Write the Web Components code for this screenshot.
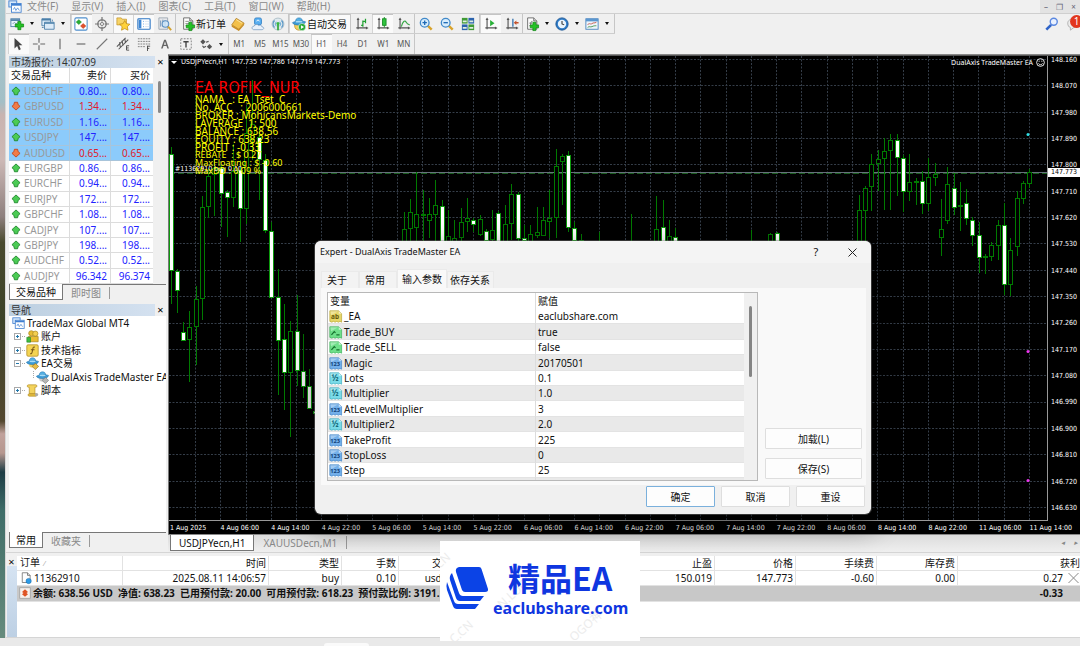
<!DOCTYPE html>
<html lang="zh-CN">
<head>
<meta charset="utf-8">
<meta name="viewport" content="width=device-width, initial-scale=1">
<title>TradeMax Global MT4</title>
<style>
html, body { height: 100%; margin: 0; }
body { font: 10px/14px "Noto Sans", "Noto Sans CJK SC", sans-serif; color: #111; overflow: hidden; background: #f0f0f0; }
</style>
</head>
<body>
<trade-desktop></trade-desktop>
<script>
const define = (name, html, setup) => {
  const tpl = document.createElement('template');
  tpl.innerHTML = '<style>*{box-sizing:border-box}button,a{font:inherit;color:inherit;text-decoration:none}button{border:0;margin:0;padding:0;background:none}:host([hidden]){display:none}</style>' + html;
  customElements.define(name, class extends HTMLElement {
    connectedCallback() {
      if (this.shadowRoot) return;
      const root = this.attachShadow({ mode: 'open' });
      root.append(tpl.content.cloneNode(true));
      if (setup) setup(this, root);
    }
  });
};

/* ---------- icons, all on a 16 x 16 grid ---------- */
const plus = (x, y) => `<path transform="translate(${x} ${y})" d="M3 0h3.4v3H9.500v3.400H6.400v3.100H3V6.400H0V3h3z" fill="#25c225" stroke="#0b8410" stroke-width=".8"/>`;
const axes = '<path d="M3.500 2v12M1.500 12.500h12" stroke="#555" stroke-width="1.300" fill="none"/><path d="M3.500.5 1.800 3.500h3.400zM15.500 12.500l-3-1.700v3.400z" fill="#555"/>';
const sheet = '<path d="M3 1h7l3.500 3.500V14H3z" fill="#fdfdfd" stroke="#666"/><path d="M10 1v3.500h3.500" fill="#ddd" stroke="#666"/>';
const hat = '<path d="M4 5.500C4 2 6 1 8 1s4 1 4 4.500z" fill="#54b0e4" stroke="#2579b5" stroke-width=".7"/><path d="M.5 6.500C3 4.500 13 4 15.500 5.500 14.500 9 10 9.500 7 9.200 4 9 1.500 8.500.5 6.500z" fill="#3d9bd6" stroke="#2272ab" stroke-width=".7"/><ellipse cx="8" cy="5.400" rx="4" ry="1" fill="#a5dcf7"/>';
const param = (a, b, inner) => `<path d="M1 1h11l3.500 3.500V15l-2-1-2 1-2-1-2 1-2-1-2 1L1 14z" fill="${a}" stroke="${b}" stroke-width=".8"/><path d="M12 1v3.500h3.500z" fill="#fff" opacity=".6"/><path d="M1.500 1.500h10l-9 5z" fill="#fff" opacity=".35"/>${inner}`;
const label = (t, c, s) => `<text x="7.500" y="11" font-family="Noto Sans" font-weight="700" font-size="${s}" text-anchor="middle" fill="${c}">${t}</text>`;
const ICONS = {
  logo: '<rect x="1" y="1" width="9" height="7" fill="#d7e8fa" stroke="#3f7fd0"/><rect x="4" y="4" width="11" height="10" fill="#fff" stroke="#3f7fd0"/><path d="M4 5.500h11" stroke="#3f7fd0" stroke-width="2"/><path d="M6 11l1.500-2.500L9 12l2-3 2 3" fill="none" stroke="#5e93d8"/>',
  newchart: '<rect x="1" y="2" width="10" height="9" fill="#e8f2fc" stroke="#4d7ea8"/><path d="M1 3.500h10" stroke="#4d7ea8" stroke-width="2"/><path d="M3 8l2-2 2 2 2-2" stroke="#79a" fill="none"/>' + plus(6, 5),
  profiles: '<path d="M1 2h10v8H1z" fill="#dcebf8" stroke="#4a7fa9"/><path d="M1 3h10" stroke="#4a7fa9" stroke-width="2"/><path d="M4 6h11v8H4z" fill="#dcebf8" stroke="#4a7fa9"/><path d="M4 7h11" stroke="#4a7fa9" stroke-width="1.500"/><path d="M1 12h2M13 3v2" stroke="#4a7fa9"/>',
  market: '<rect x="1" y="1" width="14" height="14" rx="1.500" fill="#fff" stroke="#4f8fcd" stroke-width="1.200"/><path d="M5.500 3l3 2.800-3 2.800-3-2.800z" fill="#27ae32" stroke="#178322" stroke-width=".6"/><path d="M10.500 7.500l3 2.800-3 2.800-3-2.800z" fill="#e4502c" stroke="#b03214" stroke-width=".6"/>',
  data: '<circle cx="8" cy="8" r="4.800" fill="none" stroke="#777" stroke-width="1.500"/><circle cx="8" cy="8" r="1.800" fill="none" stroke="#777"/><path d="M8 0v5M8 11v5M0 8h5M11 8h5" stroke="#777" stroke-width="1.400"/>',
  navigator: '<path d="M1 3V1h5l1 1.500h5V9H1z" fill="#f7d468" stroke="#c29023" stroke-width=".8"/><path d="M10 4l1.900 3.600 4 .6-2.900 2.900.7 4L10 13.200l-3.700 1.900.7-4-2.900-2.900 4-.6z" fill="#ffd23b" stroke="#b98613" stroke-width=".8"/>',
  terminal: '<rect x="1" y="2" width="14" height="12" rx="1" fill="#fff" stroke="#2f77c4" stroke-width="1.300"/><path d="M2 3h3v10H2z" fill="#3d86d4"/><path d="M7 5h1M7 8h1M7 11h1" stroke="#5a9be0"/><path d="M9 5h5M9 8h5M9 11h5" stroke="#d5e2f0"/>',
  tester: '<path d="M1 1h10v13H1z" fill="#e7e9ec" stroke="#9aa5b0"/><path d="M3 4v7M5.500 3v7M8 4v7" stroke="#6c8fb4"/><circle cx="8.500" cy="8" r="3.800" fill="#cfe7fb" fill-opacity=".8" stroke="#5a8fc2" stroke-width="1.200"/><path d="M11.500 11l3.500 4" stroke="#d3a12e" stroke-width="2.200"/>',
  order: sheet + '<path d="M5 5h4M5 7.500h5M5 10h3" stroke="#888"/>' + plus(6, 6),
  editor: '<path d="M6 1.500l9 5.500-6 7L.8 9z" fill="#f3c04a" stroke="#a8741a" stroke-width=".8"/><path d="M.8 9L9 14l6-7v2.200L9 16 .8 11z" fill="#c98d22"/><path d="M6 3l6.500 4" stroke="#fde9a8"/>',
  community: '<rect x="4" y="1" width="8" height="8" rx="2" fill="#58aef0" stroke="#2374bb" stroke-width=".8"/><path d="M6.500 5c0-2 3-2 3 0" stroke="#fff" fill="none"/><path d="M3 14.500c-2.500-.5-2.500-4 .5-4C4 8 8 8 8.800 9.800c2-1.300 4 0 3.700 1.500 3 .2 2.500 3 0 3.200z" fill="#e9f1fa" stroke="#6d93bb" stroke-width=".8"/>',
  signals: '<circle cx="8" cy="8" r="6.800" fill="#dfe9ee" stroke="#a9bcc6"/><path d="M4 12a6 6 0 0 1 0-8M12 4a6 6 0 0 1 0 8" stroke="#4d90c4" fill="none" stroke-width="1.300"/><path d="M6 10.500a3.500 3.500 0 0 1 0-5M10 5.500a3.500 3.500 0 0 1 0 5" stroke="#5aa0cf" fill="none"/><path d="M8 7v8" stroke="#35a83c" stroke-width="2"/><circle cx="8" cy="7.500" r="1.800" fill="#3ab644"/>',
  auto: '<path d="M3 7h10v3c0 3-2 5-5 5s-5-2-5-5z" fill="#f4d05e" stroke="#b38a21" stroke-width=".8"/>' + hat + '<circle cx="11.500" cy="11.500" r="4.200" fill="#27a936" stroke="#fff" stroke-width=".6"/><path d="M10.200 9.300v4.400l3.600-2.200z" fill="#fff"/>',
  bars: axes + '<path d="M9 4v7M9 5h3M7 9.500h2M12 2v5" stroke="#21a031" stroke-width="1.400" fill="none"/>',
  candles: axes + '<path d="M9.500 0v12" stroke="#178a24"/><rect x="7.500" y="2" width="4" height="7.500" fill="#2fc43e" stroke="#178a24"/>',
  line: axes + '<path d="M5 11C6.500 5 9 3 10.500 6c1 2 2 2.500 4 3" stroke="#36a645" stroke-width="1.300" fill="none"/>',
  zoomin: '<path d="M10 10l4.500 4.500" stroke="#d8a32c" stroke-width="2.800"/><circle cx="6.500" cy="6.500" r="5" fill="#d8edfc" stroke="#4189c9" stroke-width="1.500"/><path d="M4 6.500h5M6.500 4v5" stroke="#1d69b5" stroke-width="1.500"/>',
  zoomout: '<path d="M10 10l4.500 4.500" stroke="#d8a32c" stroke-width="2.800"/><circle cx="6.500" cy="6.500" r="5" fill="#d8edfc" stroke="#4189c9" stroke-width="1.500"/><path d="M4 6.500h5" stroke="#1d69b5" stroke-width="1.500"/>',
  tile: '<rect x="1" y="1" width="6.500" height="6.500" fill="#3f9a35"/><rect x="8.500" y="1" width="6.500" height="6.500" fill="#2b63ad"/><rect x="1" y="8.500" width="6.500" height="6.500" fill="#2b63ad"/><rect x="8.500" y="8.500" width="6.500" height="6.500" fill="#3f9a35"/><path d="M2 4h4.500v2H2zM9.500 4H14v2H9.500zM2 11.500h4.500v2H2zM9.500 11.500H14v2H9.500z" fill="#dfeee0"/>',
  scroll: axes + '<path d="M7 3.500v7l5-3.500z" fill="#29b038"/>',
  shift: axes + '<path d="M9 2v9" stroke="#3572ae" stroke-width="1.500"/><path d="M10 6.500l3-2.500v1.700h2.500v1.600H13V9z" fill="#c4512b"/>',
  indicator: sheet + '<path d="M5 10c2 1 1-6 3.500-5M5 7h3" stroke="#666" fill="none"/>' + plus(6, 6),
  clock: '<circle cx="8" cy="8" r="7" fill="#2c7ac8" stroke="#16508e"/><circle cx="8" cy="8" r="4.800" fill="#e9f4fd"/><path d="M8 4.500V8l2.500 1" stroke="#333" fill="none" stroke-width="1.200"/>',
  template: '<rect x="1" y="2" width="14" height="12" fill="#eef5fb" stroke="#4682bd"/><path d="M1 3.500h14" stroke="#5b97d0" stroke-width="3"/><path d="M3 9c2-3 3 0 5-1.500s2.500 0 5-1.500" stroke="#c35546" fill="none"/><path d="M3 12c2-2 3 0 5-1s3-1 5-1" stroke="#40924c" fill="none"/>',
  cursor: '<path d="M4 1v12l3-2.800 2 4.800 2.200-1-2-4.500H13z" fill="#444"/>',
  cross: '<path d="M8 1v5.500M8 9.500V15M1 8h5.500M9.500 8H15" stroke="#666" stroke-width="1.300"/>',
  vline: '<path d="M8 2v12" stroke="#666" stroke-width="1.300"/>',
  hline: '<path d="M3 8h10" stroke="#666" stroke-width="1.300"/>',
  trend: '<path d="M2 14L14 2" stroke="#777" stroke-width="1.300"/>',
  channel: '<path d="M1 11L11 1M3 14L14 3M4 6l1 6M7 4l1 6M10 2l1 5" stroke="#555" stroke-width="1.200"/><path d="M12 10h3M12 12.500h2.500M12 15h3M12 10v5" stroke="#444" fill="none"/>',
  fibo: '<path d="M1 2h14M1 5h14M1 8h14M1 11h9" stroke="#777" stroke-dasharray="2 1"/><path d="M12 10v6M12 10.500h3M12 13h2" stroke="#444" fill="none"/>',
  text: '<path d="M3.500 13L7 3h2l3.500 10h-1.800l-1-2.800H6.300l-1 2.800z" fill="#666"/><path d="M6.700 8.800h2.600L8 5z" fill="#f0f0f0"/>',
  textbox: '<rect x="2" y="2" width="12" height="12" fill="none" stroke="#777" stroke-dasharray="2 1.500"/><path d="M5 5.500h6M8 5.500V12" stroke="#444" stroke-width="1.600"/>',
  arrows: '<path d="M4.500 2.500l3 3-3 3-3-3z" fill="#555"/><path d="M12 8l3 3-3 3-3-3z" fill="#555"/><path d="M8 6l3-1M4 10l1.500 2L8 10.500" fill="none" stroke="#555" stroke-width="1.400"/>',
  search: '<path d="M7 9l-5.500 5.500" stroke="#2f64c9" stroke-width="3"/><circle cx="10" cy="5.500" r="4" fill="#e9f1ff" stroke="#5b88e0" stroke-width="1.600"/>',
  chat: '<path d="M2 7c0-3 3-5 7-5s6 2 6 5-3 5-6 5l-4 3v-3C3 11.500 2 9.500 2 7z" fill="#ececec" stroke="#aaa"/>',
  up: '<path d="M8 1.500l6.500 6-3 2.500-1 4h-5l-1-4-3-2.500z" fill="#4bcb54" stroke="#1d8529" stroke-width="1.400"/>',
  down: '<path d="M8 14.500l6.500-6-3-2.500-1-4h-5l-1 4-3 2.500z" fill="#f07c48" stroke="#c24217" stroke-width="1.400"/>',
  accounts: '<circle cx="6.500" cy="4" r="3.200" fill="#e8bd34" stroke="#98750e" stroke-width=".7"/><circle cx="11.500" cy="4.500" r="3.200" fill="#f3cf52" stroke="#98750e" stroke-width=".7"/><path d="M3 8h12v6.500H3z" fill="#e9bd31" stroke="#98750e" stroke-width=".7"/><path d="M1 9h4.500v6H1z" fill="#3dbb40" stroke="#1c7f22" stroke-width=".7"/>',
  func: '<rect x="1" y="1" width="14" height="14" rx="1.500" fill="#f4d452" stroke="#b6912a"/><path d="M11 4C8.500 3 8.500 5 8 8s-1 4.500-3 4M6 7h4.500" stroke="#77551a" fill="none" stroke-width="1.300"/>',
  expert: '<path d="M4 8h7v2c0 2-1.500 3-3.500 3S4 12 4 10z" fill="#f4d05e"/>' + hat + '<path d="M11.500 8l4 3.500-4 4-4-4z" fill="#e9bd45" stroke="#94701c" stroke-width=".8"/>',
  expertgray: '<path d="M4 8h7v2c0 2-1.500 3-3.500 3S4 12 4 10z" fill="#ccc"/>' + hat + '<path d="M11.500 8l4 3.500-4 4-4-4z" fill="#b5b5b5" stroke="#777" stroke-width=".8"/>',
  script: '<path d="M3 1h9c2 0 2 3 0 3h-1v8H4V4H3C1 4 1 1 3 1z" fill="#f3d35d" stroke="#b08a20" stroke-width=".8"/><path d="M4 12h8c2 0 2 3 0 3H4c-2 0-2-3 0-3z" fill="#e4bd3f" stroke="#b08a20" stroke-width=".8"/><circle cx="13" cy="13" r="2" fill="#aaa"/>',
  ab: param('#e6d668', '#b3a02e', label('ab', '#675a0c', 8)),
  bool: param('#6fe08a', '#35ab52', '<path d="M3 11l3.500-4 1.500 1.500M9 11h4" stroke="#15712e" fill="none" stroke-width="1.500"/>'),
  int: param('#74b0ea', '#3d7fc2', label('123', '#123f77', 7)),
  dbl: param('#7adbe8', '#35a9bb', label('½', '#176a7a', 10)),
  position: sheet + '<circle cx="11.500" cy="12" r="3.500" fill="#2d9be6" stroke="#1769a8" stroke-width=".7"/>',
  balance: '<rect x="1" y="1" width="14" height="14" fill="#f7f2ee" stroke="#9b9b9b"/><path d="M8 3l4 3.500L10 8l2 1.500L8 13 4 9.500 6 8 4 6.500z" fill="#df5425"/>'
};
define('ui-icon', `<style>:host{display:inline-block;width:14px;height:14px;flex:none}svg{display:block;width:100%;height:100%;overflow:visible}</style><svg viewBox="0 0 16 16" aria-hidden="true"></svg>`,
  (el, r) => { r.querySelector('svg').innerHTML = ICONS[el.getAttribute('name')] || ''; });

define('tool-button', `<style>
:host{display:flex;flex:1;min-width:0}
button{display:flex;flex:1;align-items:center;justify-content:center;gap:1px;white-space:nowrap;color:#111}
:host([active]) button{background:#fafafa;box-shadow:inset 0 1px #c4c4c4,inset 1px 0 #d4d4d4}
:host([period]) button{font-size:8px;color:#555}
.arrow{display:none;border:2px solid transparent;border-top:3px solid #111;border-bottom:0;margin:0 3px 0 5px}
:host([drop]) .arrow{display:block}
:host([tight]) .arrow{margin:0 3px 0 6px}
</style><button type="button"><slot></slot><i class="arrow"></i></button>`,
(el, r) => {
  const n = el.getAttribute('icon');
  if (n) { const i = document.createElement('ui-icon'); i.setAttribute('name', n); r.querySelector('button').prepend(i); r.querySelector('button').setAttribute('aria-label', el.textContent.trim() || n); }
});

define('tool-group', `<style>:host{display:flex;border-right:1px solid #c6c6c6;width:var(--w);flex:none;box-sizing:border-box}</style><slot></slot>`,
  el => el.style.setProperty('--w', el.getAttribute('span') + 'px'));

define('menu-bar', `<style>
:host{display:flex;height:14px;border-bottom:1px solid #cfcfcf;align-items:center;color:#8a8a8a;padding-left:2px;background:#f0f0f0}
nav{display:flex;gap:13px;margin-left:5px;flex:1;line-height:11px}
nav button{line-height:11px;white-space:nowrap}
.win{display:flex;height:13px;background:#e3e3e3;width:40px;justify-content:space-around;align-items:center;font-size:8px;line-height:10px}
.win button{color:#667;line-height:10px}
</style><ui-icon name="logo"></ui-icon><nav></nav><div class="win"><button aria-label="min">–</button><button aria-label="restore">❐</button><button aria-label="close">×</button></div>`,
(el, r) => {
  r.querySelector('nav').innerHTML = ['文件(F)', '显示(V)', '插入(I)', '图表(C)', '工具(T)', '窗口(W)', '帮助(H)'].map(t => `<button type="button">${t}</button>`).join('');
});

const tb = (names, opt = '') => names.split(' ').map(n => {
  const on = n.endsWith('*'), d = n.endsWith('+'), k = n.replace(/[*+]$/, '');
  return `<tool-button icon="${k}" ${on ? 'active' : ''} ${d ? 'drop' : ''} ${opt}></tool-button>`;
}).join('');
define('tool-area', `<style>
:host{display:block;background:#f0f0f0}
.row{display:flex;height:20px;padding-left:2px;align-items:stretch}
.bar{display:flex;border-bottom:1px solid #cdcdcd}
.end{margin-left:auto;display:flex;gap:7px;align-items:center;position:relative}
.end button{display:flex}
.badge{position:absolute;right:-3px;top:1px;width:13px;height:13px;border-radius:7px;background:#e2371f;color:#fff;text-align:center;line-height:13px;font-size:10px}
.word{flex:none;padding:0 2px 0 5px}
</style>
<div class="row"><div class="bar">
<tool-group span="63">${tb('newchart+ profiles+')}</tool-group>
<tool-group span="105">${tb('market* data navigator* terminal* tester')}</tool-group>
<tool-group span="113"><tool-button class="word" icon="order">新订单</tool-button>${tb('editor community signals')}</tool-group>
<tool-group span="62"><tool-button active icon="auto">自动交易</tool-button></tool-group>
<tool-group span="64">${tb('bars candles* line')}</tool-group>
<tool-group span="65">${tb('zoomin zoomout tile')}</tool-group>
<tool-group span="43">${tb('scroll* shift')}</tool-group>
<tool-group span="92">${tb('indicator+ clock+ template+')}</tool-group>
</div><div class="end"><button type="button" aria-label="search"><ui-icon name="search"></ui-icon></button><button type="button" aria-label="chat"><ui-icon name="chat"></ui-icon></button><span class="badge">1</span></div></div>
<div class="row">
<tool-group span="221">${tb('cursor* cross vline hline trend channel fibo text textbox')}<tool-button class="drop" icon="arrows" drop></tool-button></tool-group>
<tool-group span="186">${['M1', 'M5', 'M15', 'M30', 'H1', 'H4', 'D1', 'W1', 'MN'].map(p => `<tool-button period ${p === 'H1' ? 'active' : ''}>${p}</tool-button>`).join('')}</tool-group>
</div><style>.drop{flex:none;width:32px}</style>`);

define('dock-tabs', `<style>
:host{display:flex;height:16px;border-top:1px solid #777}
button{padding:0 8px;line-height:14px;color:#888;white-space:nowrap}
button[aria-selected=true]{background:#fff;color:#111;border:1px solid #777;border-top:0;margin-top:-1px;padding:0 6px}
button:last-child{border-right:1px solid #999;height:12px;margin-top:2px;line-height:11px}
</style>`, (el, r) => el.getAttribute('tabs').split('|').forEach((t, i) => {
  const b = document.createElement('button'); b.type = 'button'; b.role = 'tab'; b.setAttribute('aria-selected', i === 0); b.textContent = t; r.append(b);
}));

define('dock-panel', `<style>
:host{display:flex;flex-direction:column;min-height:0}
header{display:flex;height:12px;line-height:12px;color:#333}
h2{flex:1;margin:0;font:inherit;padding-left:2px;background:linear-gradient(90deg,#bccfe0,#d4e1f0)}
header button{width:11px;line-height:12px;font-size:11px;color:#000}
.body{flex:1;background:#fff;min-height:0;display:flex;overflow:hidden}
</style><header><h2></h2><button type="button" aria-label="close">×</button></header><div class="body"><slot></slot></div><slot name="tabs"></slot>`,
(el, r) => r.querySelector('h2').textContent = el.getAttribute('heading'));

define('market-watch', `<style>
:host{display:flex;flex:1}
table{flex:1;border-collapse:separate;border-spacing:0;table-layout:fixed;width:100%}
th{font-weight:400;height:16px}
td,th{padding:0 3px 0 0;text-align:right;line-height:13px;border-right:1px solid #dcdcdc;border-bottom:1px solid #dcdcdc;color:#22f;overflow:hidden;white-space:nowrap}
th{color:#111;line-height:15px}
td:first-child,th:first-child{text-align:left;padding-left:2px;color:#999}
th:first-child{color:#111}
td:last-child,th:last-child{border-right:0}
tr{height:15px}
td{height:inherit}
tbody tr:nth-child(5n+2),tbody tr:nth-child(5n+4){height:16px}
.hot td{background:#8ccbfb;border-color:#a8c4da}
.dn td{color:#e0202c}
.dn td:first-child{color:#999}
ui-icon{width:10px;height:10px;vertical-align:-1px;margin-right:3px}
.gutter{width:13px;background:#f0f0f0;padding:13px 5px}
.thumb{height:32px;width:3px;border-radius:2px;background:#888}
</style><table><colgroup><col style="width:61px"><col style="width:41px"><col></colgroup><thead><tr><th>交易品种</th><th>卖价</th><th>买价</th></tr></thead><tbody></tbody></table><div class="gutter"><div class="thumb"></div></div>`,
(el, r) => {
  r.querySelector('tbody').innerHTML = [['USDCHF', '0.80...', 'hot'], ['GBPUSD', '1.34...', 'hot dn'], ['EURUSD', '1.16...', 'hot'], ['USDJPY', '147....', 'hot'], ['AUDUSD', '0.65...', 'hot dn'], ['EURGBP', '0.86...'], ['EURCHF', '0.94...'], ['EURJPY', '172....'], ['GBPCHF', '1.08...'], ['CADJPY', '107....'], ['GBPJPY', '198....'], ['AUDCHF', '0.52...'], ['AUDJPY', '96.342', '', '96.374']]
    .map(([s, a, c = '', b = a]) => `<tr class="${c}"><td><ui-icon name="${c.includes('dn') ? 'down' : 'up'}"></ui-icon>${s}</td><td>${a}</td><td>${b}</td></tr>`).join('');
});

define('nav-tree', `<style>
:host{display:block;flex:1;min-width:0}
ul{list-style:none;margin:0;padding:0}
li{display:flex;align-items:center;height:13px;white-space:nowrap;padding-left:3px;gap:2px;line-height:13px}
li:nth-child(odd){height:14px}
li.kid{padding-left:5px}
li.leaf{padding-left:28px}
ui-icon{width:13px;height:13px}
.box{width:7px;height:7px;border:1px solid #aaa;background:linear-gradient(#27a,#27a) center/3px 1px no-repeat}
.box.plus{background:linear-gradient(#27a,#27a) center/3px 1px no-repeat,linear-gradient(#27a,#27a) center/1px 3px no-repeat}
.dots{width:3px;border-top:1px dotted #aaa;margin:0 -1px}
.leaf .dots{width:8px;height:7px;border-left:1px dotted #aaa;border-top:0;border-bottom:1px dotted #aaa;margin:-6px 0 0 -4px}
</style><ul role="tree">
<li role="treeitem"><ui-icon name="logo"></ui-icon>TradeMax Global MT4</li>
<li role="treeitem" class="kid"><i class="box plus"></i><i class="dots"></i><ui-icon name="accounts"></ui-icon>账户</li>
<li role="treeitem" class="kid"><i class="box plus"></i><i class="dots"></i><ui-icon name="func"></ui-icon>技术指标</li>
<li role="treeitem" class="kid"><i class="box"></i><i class="dots"></i><ui-icon name="expert"></ui-icon>EA交易</li>
<li role="treeitem" class="leaf"><i class="dots"></i><ui-icon name="expertgray"></ui-icon>DualAxis TradeMaster EA</li>
<li role="treeitem" class="kid"><i class="box plus"></i><i class="dots"></i><ui-icon name="script"></ui-icon>脚本</li>
</ul>`);

/* Candles: x, high, body top, body bottom, low, 1 when bearish */
const CANDLES = [
[171,147,154,271,304,1],[177,269,271,291,313,1],[183,322,332,341,341,1],[189,311,327,340,382],[196,286,299,327,365],[202,196,207,299,320],[208,168,176,207,218],[214,158,168,175,216],[221,165,168,194,227,1],[227,190,192,198,237,1],[233,144,171,198,207],[240,160,170,209,242,1],[246,106,133,209,224],[252,80,124,140,160],[259,126,137,160,200,1],[265,154,160,231,233,1],[271,222,231,298,298,1],[278,269,297,341,395,1],[284,304,339,373,410,1],[290,321,331,373,437],[297,295,331,371,386,1],[303,334,371,387,398,1],[309,369,386,409,409,1],[315,405,411,414,430,1],
[404,212,229,248,260],[410,199,212,229,250],[416,172,214,228,250],[423,190,214,216,250],[429,198,214,221,238],[435,180,205,215,241],[442,200,206,244,250,1],[448,210,236,250,260],[454,220,238,250,260],[461,208,222,238,250],[467,198,218,222,232],[473,218,220,225,232,1],[480,215,219,235,236],[486,229,231,241,241,1],[492,210,230,240,250],[498,211,213,250,250,1],[505,205,224,250,250],[511,184,194,224,240],[518,192,194,239,250,1],[524,225,238,241,250,1],[530,225,234,250,250],[537,207,232,236,238],[543,207,220,236,236],[549,190,218,222,238],[556,149,166,218,238],[562,154,156,162,205],[568,151,155,228,232,1],[574,222,228,241,250,1],[581,234,240,250,250],[599,232,244,250,250],[631,214,244,250,250],[656,196,229,250,250],[663,200,227,250,250,1],[669,220,236,250,250],[675,228,237,250,250,1],[751,230,248,252,252],[770,233,234,250,250],[777,232,233,250,250,1],
[859,195,210,250,260],[865,186,188,211,245],[871,154,164,187,211],[878,150,159,164,191],[884,138,151,159,210],[890,134,140,151,210],[897,134,140,158,196,1],[903,155,158,192,212,1],[909,154,182,192,201],[916,178,181,183,205],[922,171,181,204,214,1],[928,158,177,204,211],[935,163,174,178,186],[941,199,229,238,256],[947,167,184,221,224],[954,173,188,208,215,1],[960,182,205,207,231],[966,189,203,219,225,1],[972,217,220,236,246,1],[979,222,235,258,273,1],[985,254,256,258,274],[991,242,245,257,261],[998,220,225,246,260],[1004,203,225,285,295,1],[1010,238,250,285,296],[1017,191,198,247,256],[1023,181,183,199,204],[1029,169,172,184,188]];

define('price-chart', `<style>
:host{display:grid;grid-template:minmax(0,1fr) 13px/minmax(0,1fr) 32px;background:#000;color:#fff;border-top:1px solid #555;border-left:1px solid #777;position:relative;font:7px/8px "DejaVu Sans Condensed","Noto Sans",sans-serif;overflow:hidden}
.plot{position:relative;overflow:hidden;border-right:1px solid #999;border-bottom:1px solid #999}
svg{position:absolute;left:0;top:0;width:100%;height:100%}
.prices{display:flex;flex-direction:column;justify-content:space-between;height:456px;padding-left:3px;position:relative}
.now{position:absolute;left:0;right:0;top:112px;background:#fff;color:#000;padding-left:3px;line-height:9px}
.times{grid-column:1/3;display:flex;padding-top:3px;padding-left:1px}
.times span{flex:1;min-width:0;white-space:nowrap}
.head{position:absolute;left:2px;top:2px;white-space:pre;display:flex;gap:4px;align-items:center}
.head,.ea,.info{font-family:"Noto Sans",sans-serif}
.head i{border:3px solid transparent;border-top-color:#fff;border-bottom:0}
.ea{position:absolute;right:2px;top:2px;display:flex;gap:3px;align-items:center}
.ea svg{position:static;width:9px;height:9px}
.order{position:absolute;left:6px;top:109px}
.info{position:absolute;left:26px;top:25px;color:#ff0;font-size:10px;line-height:8px;white-space:pre}
.info strong{display:block;color:#f00;font-family:"DejaVu Sans Condensed",sans-serif;font-size:16px;line-height:14px;font-weight:400}
.info span{display:block}
.info .s{font-size:9px}
</style>
<div class="plot"><svg class="g"></svg>
<div class="order">#11362910 buy 0.10</div>
<div class="info"><strong>EA ROFIK_NUR</strong><span>NAMA   : EA  Tset  C</span><span>No. ACC   : 2006000661</span><span>BROKER : MohicansMarkets-Demo</span><span>LAVERAGE  1: 500</span><span>BALANCE : 638.56</span><span>EQUITY : 638.23</span><span>PROFIT : -0.33</span><span class="s">REBATE  : $ 0.27</span><span class="s">MaxFloating : $ -0.60</span><span class="s">MaxDD : 0.09 %</span></div>
<div class="head"><i></i><span>USDJPYecn,H1  147.735 147.786 147.719 147.773</span></div>
<div class="ea">DualAxis TradeMaster EA <svg viewBox="0 0 10 10" fill="none" stroke="#fff"><circle cx="5" cy="5" r="4.300"/><path d="M2.800 6c1 2 3.400 2 4.400 0M3.500 3v1.200M6.500 3v1.200"/></svg></div>
</div><div class="prices"></div><div class="times"></div>`,
(el, r) => {
  const g = [];
  for (let k = 0; k < 70; k++) { const x = Math.round(195 + 25.27 * k) + .5; g.push(`<path d="M${x} 56V900" stroke="#343d48" stroke-dasharray="2 1.500"/>`); }
  for (let k = 0; k < 30; k++) { const y = Math.round(59 + 26.35 * k) + .5; g.push(`<path d="M169 ${y}H2400" stroke="#343d48" stroke-dasharray="2 1.500"/>`); }
  g.push('<path d="M169 172.500H2400" stroke="#66717c"/><path d="M169 173.500H2400" stroke="#1a5c1f" stroke-dasharray="6 3"/>');
  for (const [x, h, t, b, l, w] of CANDLES) {
    g.push(`<path d="M${x + .5} ${h}V${t}M${x + .5} ${b}V${l}" stroke="#007a00"/>`);
    g.push(`<rect x="${x - 1.5}" y="${t + .5}" width="4" height="${Math.max(1, b - t - 1)}" fill="${w ? '#fff' : '#000'}" stroke="${w ? '#0c9a0c' : '#007a00'}"/>`);
  }
  g.push('<circle cx="1028" cy="134.500" r="1.500" fill="#2fe0e6"/><circle cx="1028" cy="351.500" r="1.500" fill="#f034f0"/><circle cx="1028" cy="480.500" r="1.500" fill="#f034f0"/>');
  r.querySelector('.g').innerHTML = `<g transform="translate(-169 -56)" fill="none">${g.join('')}</g>`;
  const P = [];
  for (let i = 0; i < 18; i++) P.push(`<span>${(148.16 - i * .09).toFixed(3)}</span>`);
  r.querySelector('.prices').innerHTML = P.join('') + '<span class="now">147.773</span>';
  const T = ['1 Aug 2025'];
  for (const d of [4, 5, 6, 7, 8, 11]) for (const h of ['06', '14', '22']) if (d < 11 || h < '22') T.push(`${d} Aug ${h}:00`);
  r.querySelector('.times').innerHTML = T.map(t => `<span>${t}</span>`).join('');
});

define('chart-tabs', `<style>
:host{display:flex;height:18px;background:linear-gradient(#dcdcdc,#efefef);border-top:1px solid #888;padding:0 2px 1px}
button{padding:0 9px;color:#888;line-height:14px;border-right:1px solid #999;height:13px;margin-top:1px}
button.on{background:#fff;color:#111;border:1px solid #777;border-top:0;height:16px;margin-top:0;padding:0 8px}
span{margin-left:auto;color:#888;font-size:7px;display:flex;gap:9px;line-height:16px}
</style><button class="on" type="button">USDJPYecn,H1</button><button type="button">XAUUSDecn,M1</button><span><i>◂</i><i>▸</i></span>`);

const PARAMS = [['ab', '_EA', 'eaclubshare.com'], ['bool', 'Trade_BUY', 'true'], ['bool', 'Trade_SELL', 'false'], ['int', 'Magic', '20170501'], ['dbl', 'Lots', '0.1'], ['dbl', 'Multiplier', '1.0'], ['int', 'AtLevelMultiplier', '3'], ['dbl', 'Multiplier2', '2.0'], ['int', 'TakeProfit', '225'], ['int', 'StopLoss', '0'], ['int', 'Step', '25'], ['int', '', '']];
define('expert-dialog', `<style>
:host{display:flex;flex-direction:column;background:#f0f0f0;border-radius:6px;box-shadow:0 0 0 1px #8886,0 10px 26px 4px #0006;overflow:hidden}
header{display:flex;height:22px;background:#f4f4f4;align-items:center;padding:0 12px 0 5px}
h2{font:inherit;font-size:9px;margin:0;flex:1}
header button{width:14px;margin-left:22px;display:flex;justify-content:center;font-size:11px}
header svg{width:9px;height:9px}
nav{display:flex;align-items:flex-end;padding:6px 0 0 6px;height:25px}
nav button{height:17px;padding:0 9px 0 5px;min-width:38px;background:#f3f3f3;border:1px solid #eaeaea;border-bottom:0;text-align:left;line-height:15px}
nav button.on{height:19px;background:#f9f9f9;padding:0 4px}
nav button.last{padding:0 3px 0 2px}
.page{display:flex;background:#f9f9f9;margin:0 5px 0 6px;padding:4px 4px 4px 6px;gap:7px;height:197px}
.list{flex:1;display:flex;border:1px solid #b8b8b8;height:189px;overflow:hidden;background:#fff}
table{flex:1;border-spacing:0;table-layout:fixed;width:100%;align-self:flex-start}
th{font-weight:400;text-align:left;height:16px;line-height:14px}
td,th{padding:0 2px;white-space:nowrap}
tbody td{line-height:14px;border-bottom:1px solid #e3e3e3}
td:first-child,th:first-child{border-right:1px solid #dcdcdc}
td:first-child{padding-left:1px}
tr{height:15px}
tbody tr:nth-child(5n+2),tbody tr:nth-child(5n+4){height:16px}
tbody tr:nth-child(even) td{background:#e9e9e9}
ui-icon{width:13px;height:13px;vertical-align:-3px;margin-right:2px}
.gutter{width:13px;background:#f0f0f0;padding:13px 5px}
.thumb{width:3px;height:71px;border-radius:2px;background:#858585}
.side{width:97px;display:flex;flex-direction:column;justify-content:flex-end;gap:9px;padding-bottom:2px}
.side button,footer button{background:#fdfdfd;border:1px solid #dedede;border-radius:1px;height:21px}
footer{display:flex;justify-content:flex-end;gap:6px;padding:1px 6px 0 0}
footer button{width:69px}
footer .ok{border-color:#7ab0dc}
</style>
<header><h2>Expert - DualAxis TradeMaster EA</h2><button type="button">?</button><button type="button" aria-label="close"><svg viewBox="0 0 9 9"><path d="M.5.5l8 8M8.500.5l-8 8" stroke="#222"/></svg></button></header>
<nav><button type="button">关于</button><button type="button">常用</button><button class="on" type="button">输入参数</button><button type="button" class="last">依存关系</button></nav>
<div class="page"><div class="list"><table><thead><tr><th>变量</th><th>赋值</th></tr></thead><tbody></tbody></table><div class="gutter"><div class="thumb"></div></div></div>
<div class="side"><button type="button">加载(L)</button><button type="button">保存(S)</button></div></div>
<footer><button class="ok" type="button">确定</button><button type="button">取消</button><button type="button">重设</button></footer>`,
(el, r) => { r.querySelector('tbody').innerHTML = PARAMS.map(([i, k, v]) => `<tr><td><ui-icon name="${i}"></ui-icon>${k}</td><td>${v}</td></tr>`).join(''); });

define('trade-terminal', `<style>
:host{display:flex;background:#f0f0f0;border-top:1px solid #d5d5d5;border-bottom:1px solid #d5d5d5;padding-top:3px}
aside{width:11px;display:flex;flex-direction:column}
aside button{font-size:11px;line-height:9px;height:10px}
aside i{flex:1;background:linear-gradient(#d5e3f2,#bdd0e4);margin-left:1px}
.body{flex:1;min-width:0;background:#fff}
table{width:100%;border-spacing:0;table-layout:fixed}
th,td{font-weight:400;text-align:right;padding:0 2px;height:15px;line-height:13px;white-space:nowrap;border-right:1px solid #e2e2e2;border-bottom:1px solid #e2e2e2;overflow:hidden}
th:first-child,td:first-child{text-align:left;padding-left:3px}
th:last-child,td:last-child{border-right:0}
th:last-child{padding-right:0}
td:last-child{padding-right:17px;position:relative}
td button{position:absolute;right:1px;top:2px;display:flex}
td svg{width:11px;height:10px}
th span{color:#999;margin-left:4px;font-size:7px}
ui-icon{width:12px;height:12px;vertical-align:-2px;margin-right:2px}
.sum td{background:#c8c8c8;font-weight:700;border-right:0;white-space:pre;height:16px;padding-left:2px}
</style><aside><button type="button" aria-label="close">×</button><i></i></aside><div class="body"><table>
<colgroup><col style="width:106px"><col style="width:146px"><col style="width:73px"><col style="width:57px"><col style="width:76px"><col style="width:120px"><col style="width:120px"><col style="width:81px"><col style="width:81px"><col style="width:81px"><col></colgroup>
<thead><tr><th>订单<span>⁄</span></th><th>时间</th><th>类型</th><th>手数</th><th>交易品种</th><th></th><th>止盈</th><th>价格</th><th>手续费</th><th>库存费</th><th>获利</th></tr></thead>
<tbody><tr><td><ui-icon name="position"></ui-icon>11362910</td><td>2025.08.11 14:06:57</td><td>buy</td><td>0.10</td><td>usdjpyecn</td><td></td><td>150.019</td><td>147.773</td><td>-0.60</td><td>0.00</td><td>0.27<button type="button" aria-label="close order"><svg viewBox="0 0 11 10"><path d="M.5 0l10 10M10.500 0l-10 10" stroke="#888"/></svg></button></td></tr>
<tr class="sum"><td colspan="10"><ui-icon name="balance"></ui-icon>余额: 638.56 USD  净值: 638.23  已用预付款: 20.00  可用预付款: 618.23  预付款比例: 3191.15%</td><td>-0.33</td></tr></tbody></table></div>`);

define('brand-card', `<style>:host{display:block;width:200px;height:100px;background:#fff}svg{display:block;font-family:"Noto Sans","Noto Sans CJK SC",sans-serif}</style>
<svg width="200" height="100" viewBox="0 0 200 100"><g fill="#ececec" font-size="12"><text transform="translate(-3 30) rotate(-42)">.CN</text><text transform="translate(14 103) rotate(-42)">C.CN</text><text transform="translate(62 68) rotate(-42)">N.LOGO</text><text transform="translate(134 101) rotate(-42)">OGO神</text></g>
<g fill="#0b43e6"><path d="M19 26h20q2 0 2.500 2l6.500 20q.5 3-3 3H25q-2 0-3-2l-6-18q-1-4 3-5z"/><path d="M12 32l7 20q1 3 4 3h21l-4 5H20q-3 0-4-3L10 39q-1-4 2-7z"/><path d="M7 41l7 19q1 3 4 3h21l-4 5H17q-3 0-4-3L7 49q-1-5 0-8z"/></g>
<g fill="#0f36e0" font-weight="700"><text x="68" y="50" font-size="32" style="font-family:'Noto Sans CJK SC',sans-serif">精品EA</text><text x="53" y="73" font-size="16">eaclubshare.com</text></g></svg>`);

define('trade-desktop', `<style>
:host{display:grid;height:100vh;grid-template:minmax(0,1fr) 8px/5px minmax(0,1fr);position:relative;overflow:hidden}
.wall{background:linear-gradient(#a9c7cf 0,#a3bfc6 16%,#c9b4b0 18%,#cdb9b6 25%,#8d7f7d 34%,#494a2e 38%,#3d4328 50%,#54482f 66%,#c1a29c 68%,#b6978f 71%,#1d3c45 74%,#3f6d68 80%,#668b7d 100%)}
.app{display:flex;flex-direction:column;min-height:0;border-left:1px solid #d8d8d8}
.work{flex:1;display:flex;min-height:0}
.dock{width:162px;display:flex;flex-direction:column;padding:2px 2px 4px 3px;gap:4px}
.nav{flex:1}
.charts{flex:1;min-width:0;display:flex;flex-direction:column;border-top:1px solid #888}
price-chart{flex:1;min-height:0}
trade-terminal{height:86px}
.task{grid-column:1/3;background:#e9e9e9;padding:5px 0 0 324px}
.task i{display:block;width:45px;height:3px;background:#fafafa;border-radius:3px 3px 0 0}
expert-dialog{position:absolute;left:315px;top:241px;width:556px;height:273px}
brand-card{position:absolute;left:440px;top:541px}
</style>
<div class="wall"></div>
<main class="app"><menu-bar></menu-bar><tool-area></tool-area>
<div class="work"><div class="dock">
<dock-panel heading="市场报价: 14:07:09"><market-watch></market-watch><dock-tabs slot="tabs" tabs="交易品种|即时图"></dock-tabs></dock-panel>
<dock-panel class="nav" heading="导航"><nav-tree></nav-tree><dock-tabs slot="tabs" tabs="常用|收藏夹"></dock-tabs></dock-panel>
</div><div class="charts"><price-chart></price-chart><chart-tabs></chart-tabs></div></div>
<trade-terminal></trade-terminal></main>
<div class="task"><i></i></div>
<expert-dialog role="dialog"></expert-dialog><brand-card></brand-card>`);
</script>
</body>
</html>
